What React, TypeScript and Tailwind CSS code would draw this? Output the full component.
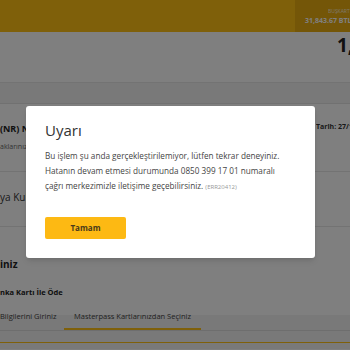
// Ödeme sayfası üzerinde açılan hata uyarısı penceresi.
export default function App() {
  return (
    <div className="relative h-[350px] w-[350px] overflow-hidden bg-white font-['Open_Sans',sans-serif] text-[#333]">
      <header className="flex h-[32px] bg-[#ffc014]">
        <div className="ml-auto flex w-[55px] flex-col justify-center overflow-hidden bg-[#e9ac10] pl-[10px] leading-none text-white whitespace-nowrap">
          <span className="pl-[23px] text-[5px] opacity-80">BUŞKART</span>
          <span className="mt-[3px] text-[7px] font-bold">31,843.67 BTL</span>
        </div>
      </header>

      <div className="h-[51px] border-b border-[#e6e6e6] pl-[337px] whitespace-nowrap">
        <span className="text-[19px] font-bold leading-[26px] text-[#222]">1,250.00 TL</span>
      </div>

      <div className="h-[266px] bg-[#f3f3f3] pt-[20px]">
        <div className="border-t border-[#e2e2e2] bg-white">
          <div className="flex h-[68px] flex-col border-b border-[#e6e6e6] pt-[18px] whitespace-nowrap">
            <div className="flex">
              <span className="text-[9px] font-bold text-[#222]">(NR) Nakit</span>
              <span className="ml-auto w-[34px] overflow-hidden text-[7px] font-bold text-[#333]">Tarih: 27/11</span>
            </div>
            <span className="mt-[6px] text-[7px] text-[#666]">aklarınız</span>
          </div>
          <div className="flex h-[55px] items-center border-b border-[#e6e6e6] whitespace-nowrap">
            <span className="-mt-[4px] text-[10px] text-[#333]">ya Kullanımı</span>
          </div>
          <div className="h-[88px] whitespace-nowrap">
            <div className="pt-[30px] text-[10px] font-bold text-[#222]">iniz</div>
            <div className="mt-[15px] text-[7.5px] font-bold text-[#222]">nka Kartı İle Öde</div>
          </div>
        </div>
      </div>

      <div className="-mt-[38px] whitespace-nowrap">
        <div className="flex border-b border-[#dcdcdc] text-[7.5px] text-[#444]">
          <span className="w-[64px] pb-[8px]">Bilgilerini Giriniz</span>
          <span className="border-b-2 border-[#ffc014] px-[10px] pb-[6px]">Masterpass Kartlarınızdan Seçiniz</span>
        </div>
        <div className="mt-[11px] h-px bg-[#ffc014]" />
      </div>

      <div className="absolute inset-0 bg-black/50">
        <div className="absolute left-[26px] top-[106px] h-[152px] w-[289px] rounded-[3px] bg-white px-[19px] pt-[13px] shadow-md">
          <h2 className="text-[15px] leading-[22px] text-[#333]">Uyarı</h2>
          <p className="mt-[7px] text-[8.2px] leading-[15px] whitespace-nowrap text-[#444]">
            Bu işlem şu anda gerçekleştirilemiyor, lütfen tekrar deneyiniz.
            <br />
            Hatanın devam etmesi durumunda 0850 399 17 01 numaralı
            <br />
            çağrı merkezimizle iletişime geçebilirsiniz.{" "}
            <span className="text-[6px] text-[#999]">(ERR20412)</span>
          </p>
          <button className="mt-[22px] flex h-[22px] w-[81px] items-center justify-center rounded-[2px] bg-[#fdb913] text-[8px] font-bold text-[#4a3a1a]">
            Tamam
          </button>
        </div>
      </div>
    </div>
  );
}
